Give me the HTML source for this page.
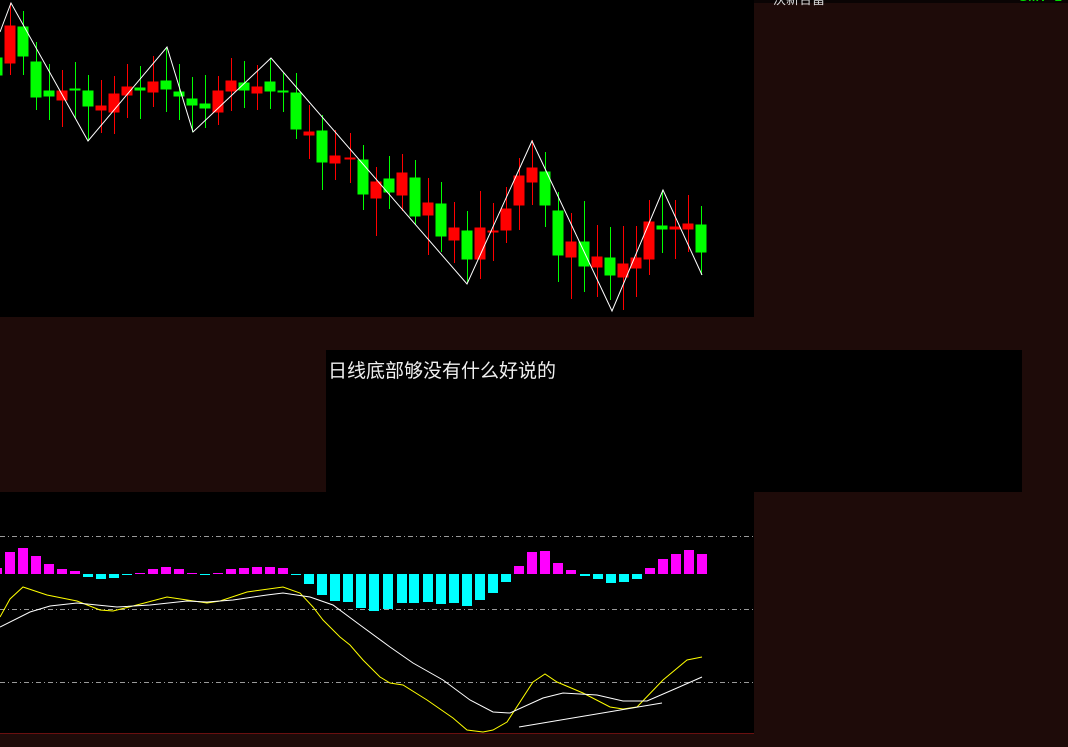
<!DOCTYPE html>
<html><head><meta charset="utf-8"><style>
html,body{margin:0;padding:0;width:1068px;height:747px;overflow:hidden;background:#1e0b09;}
.abs{position:absolute}
</style></head><body>
<div class="abs" style="left:0;top:0;width:754px;height:317px;background:#000"></div>
<div class="abs" style="left:754px;top:0;width:314px;height:3px;background:#0a0404"></div>
<div class="abs" style="left:773px;top:-11px;font:13px 'Liberation Sans','Noto Sans CJK SC',sans-serif;color:#ddd">沃新合富</div>
<div class="abs" style="left:1018px;top:-11px;font:bold 13px 'Liberation Sans',sans-serif;color:#00e000">GMT+1</div>
<div class="abs" style="left:326px;top:350px;width:696px;height:142px;background:#000"></div>
<div class="abs" style="left:328px;top:356px;font:19px 'Liberation Sans','Noto Sans CJK SC',sans-serif;color:#f0f0f0;white-space:nowrap">日线底部够没有什么好说的</div>
<div class="abs" style="left:0;top:492px;width:754px;height:241px;background:#000"></div>
<div class="abs" style="left:0;top:733px;width:754px;height:1px;background:#6a1010"></div>
<svg class="abs" style="left:0;top:0" width="754" height="317">
<g stroke-width="1">
<g stroke="#00ff00" fill="#00ff00">
<rect x="-4" y="58" width="6" height="17"/>
<line x1="23.5" y1="11" x2="23.5" y2="75"/><rect x="18" y="27" width="10" height="29"/>
<line x1="36.5" y1="42" x2="36.5" y2="110"/><rect x="31" y="62" width="10" height="35"/>
<line x1="49.5" y1="64" x2="49.5" y2="120"/><rect x="44" y="91" width="10" height="5"/>
<line x1="75.5" y1="62" x2="75.5" y2="118"/><rect x="70" y="89" width="10" height="1"/>
<line x1="88.5" y1="75" x2="88.5" y2="141"/><rect x="83" y="91" width="10" height="15"/>
<line x1="140.5" y1="66" x2="140.5" y2="119"/><rect x="135" y="88" width="10" height="2"/>
<line x1="166.5" y1="47" x2="166.5" y2="112"/><rect x="161" y="81" width="10" height="8"/>
<line x1="179.5" y1="64" x2="179.5" y2="120"/><rect x="174" y="92" width="10" height="4"/>
<line x1="192.5" y1="77" x2="192.5" y2="132"/><rect x="187" y="99" width="10" height="6"/>
<line x1="205.5" y1="75" x2="205.5" y2="128"/><rect x="200" y="104" width="10" height="4"/>
<line x1="244.5" y1="61" x2="244.5" y2="108"/><rect x="239" y="83" width="10" height="7"/>
<line x1="270.5" y1="58" x2="270.5" y2="109"/><rect x="265" y="82" width="10" height="9"/>
<line x1="283.5" y1="73" x2="283.5" y2="112"/><rect x="278" y="91" width="10" height="1"/>
<line x1="296.5" y1="73" x2="296.5" y2="139"/><rect x="291" y="93" width="10" height="36"/>
<line x1="322.5" y1="115" x2="322.5" y2="190"/><rect x="317" y="131" width="10" height="31"/>
<line x1="363.5" y1="145" x2="363.5" y2="210"/><rect x="358" y="160" width="10" height="34"/>
<line x1="389.5" y1="156" x2="389.5" y2="209"/><rect x="384" y="179" width="10" height="13"/>
<line x1="415.5" y1="160" x2="415.5" y2="225"/><rect x="410" y="178" width="10" height="38"/>
<line x1="441.5" y1="182" x2="441.5" y2="252"/><rect x="436" y="204" width="10" height="32"/>
<line x1="467.5" y1="211" x2="467.5" y2="283"/><rect x="462" y="231" width="10" height="28"/>
<line x1="545.5" y1="152" x2="545.5" y2="227"/><rect x="540" y="172" width="10" height="33"/>
<line x1="558.5" y1="192" x2="558.5" y2="282"/><rect x="553" y="211" width="10" height="44"/>
<line x1="584.5" y1="201" x2="584.5" y2="292"/><rect x="579" y="242" width="10" height="24"/>
<line x1="610.5" y1="227" x2="610.5" y2="300"/><rect x="605" y="258" width="10" height="17"/>
<line x1="662.5" y1="190" x2="662.5" y2="253"/><rect x="657" y="226" width="10" height="3"/>
<line x1="701.5" y1="206" x2="701.5" y2="275"/><rect x="696" y="225" width="10" height="27"/>
</g>
<g stroke="#ff0000" fill="#ff0000">
<line x1="10.5" y1="3" x2="10.5" y2="75"/><rect x="5" y="26" width="10" height="37"/>
<line x1="62.5" y1="70" x2="62.5" y2="127"/><rect x="57" y="91" width="10" height="9"/>
<line x1="101.5" y1="80" x2="101.5" y2="133"/><rect x="96" y="106" width="10" height="4"/>
<line x1="114.5" y1="76" x2="114.5" y2="134"/><rect x="109" y="94" width="10" height="18"/>
<line x1="127.5" y1="64" x2="127.5" y2="118"/><rect x="122" y="87" width="10" height="8"/>
<line x1="153.5" y1="56" x2="153.5" y2="107"/><rect x="148" y="82" width="10" height="10"/>
<line x1="218.5" y1="76" x2="218.5" y2="125"/><rect x="213" y="91" width="10" height="21"/>
<line x1="231.5" y1="58" x2="231.5" y2="111"/><rect x="226" y="81" width="10" height="10"/>
<line x1="257.5" y1="65" x2="257.5" y2="110"/><rect x="252" y="87" width="10" height="6"/>
<line x1="309.5" y1="105" x2="309.5" y2="159"/><rect x="304" y="132" width="10" height="3"/>
<line x1="335.5" y1="130" x2="335.5" y2="180"/><rect x="330" y="156" width="10" height="7"/>
<line x1="350.5" y1="133" x2="350.5" y2="183"/><rect x="345" y="158" width="10" height="1"/>
<line x1="376.5" y1="167" x2="376.5" y2="236"/><rect x="371" y="182" width="10" height="16"/>
<line x1="402.5" y1="154" x2="402.5" y2="211"/><rect x="397" y="173" width="10" height="22"/>
<line x1="428.5" y1="178" x2="428.5" y2="255"/><rect x="423" y="203" width="10" height="12"/>
<line x1="454.5" y1="202" x2="454.5" y2="263"/><rect x="449" y="228" width="10" height="12"/>
<line x1="480.5" y1="191" x2="480.5" y2="279"/><rect x="475" y="228" width="10" height="31"/>
<line x1="493.5" y1="203" x2="493.5" y2="261"/><rect x="488" y="231" width="10" height="1"/>
<line x1="506.5" y1="187" x2="506.5" y2="243"/><rect x="501" y="209" width="10" height="21"/>
<line x1="519.5" y1="158" x2="519.5" y2="230"/><rect x="514" y="176" width="10" height="29"/>
<line x1="532.5" y1="140" x2="532.5" y2="205"/><rect x="527" y="168" width="10" height="14"/>
<line x1="571.5" y1="213" x2="571.5" y2="299"/><rect x="566" y="242" width="10" height="15"/>
<line x1="597.5" y1="225" x2="597.5" y2="297"/><rect x="592" y="257" width="10" height="10"/>
<line x1="623.5" y1="226" x2="623.5" y2="310"/><rect x="618" y="264" width="10" height="13"/>
<line x1="636.5" y1="226" x2="636.5" y2="297"/><rect x="631" y="258" width="10" height="10"/>
<line x1="649.5" y1="200" x2="649.5" y2="275"/><rect x="644" y="222" width="10" height="37"/>
<line x1="675.5" y1="200" x2="675.5" y2="259"/><rect x="670" y="227" width="10" height="2"/>
<line x1="688.5" y1="195" x2="688.5" y2="252"/><rect x="683" y="224" width="10" height="5"/>
</g>
</g>
<polyline fill="none" stroke="#fff" stroke-width="1" points="0,32 11,3 88,141 167,47 193,132 271,58 467,284 532,141 612,311 663,190 702,275"/>
</svg>
<svg class="abs" style="left:0;top:492px" width="754" height="241">
<g stroke="#9a9a9a" stroke-dasharray="5,3,1,3" stroke-width="1">
<line x1="0" y1="44.5" x2="754" y2="44.5"/><line x1="0" y1="117.5" x2="754" y2="117.5"/><line x1="0" y1="190.5" x2="754" y2="190.5"/>
</g>
<g transform="translate(0,-492)">
<g fill="#ff00ff">
<rect x="-3" y="568" width="5" height="6"/><rect x="5" y="552" width="10" height="22"/><rect x="18" y="548" width="10" height="26"/><rect x="31" y="556" width="10" height="18"/><rect x="44" y="564" width="10" height="10"/><rect x="57" y="569" width="10" height="5"/><rect x="70" y="571" width="10" height="3"/>
<rect x="135" y="573" width="10" height="1"/><rect x="148" y="569" width="10" height="5"/><rect x="161" y="567" width="10" height="7"/><rect x="174" y="569" width="10" height="5"/><rect x="187" y="573" width="10" height="1"/><rect x="213" y="573" width="10" height="1"/><rect x="226" y="569" width="10" height="5"/><rect x="239" y="568" width="10" height="6"/><rect x="252" y="567" width="10" height="7"/><rect x="265" y="567" width="10" height="7"/><rect x="278" y="568" width="10" height="6"/>
<rect x="514" y="566" width="10" height="8"/><rect x="527" y="552" width="10" height="22"/><rect x="540" y="551" width="10" height="23"/><rect x="553" y="563" width="10" height="11"/><rect x="566" y="570" width="10" height="4"/>
<rect x="645" y="568" width="10" height="6"/><rect x="658" y="559" width="10" height="15"/><rect x="671" y="554" width="10" height="20"/><rect x="684" y="550" width="10" height="24"/><rect x="697" y="554" width="10" height="20"/>
</g>
<g fill="#00ffff">
<rect x="83" y="574" width="10" height="3"/><rect x="96" y="574" width="10" height="5"/><rect x="109" y="574" width="10" height="4"/><rect x="122" y="574" width="10" height="1"/><rect x="200" y="574" width="10" height="1"/><rect x="291" y="574" width="10" height="1"/>
<rect x="304" y="574" width="10" height="10"/><rect x="317" y="574" width="10" height="21"/><rect x="330" y="574" width="10" height="27"/><rect x="343" y="574" width="10" height="28"/><rect x="356" y="574" width="10" height="34"/><rect x="369" y="574" width="10" height="37"/><rect x="383" y="574" width="10" height="35"/><rect x="397" y="574" width="10" height="29"/><rect x="409" y="574" width="10" height="29"/><rect x="423" y="574" width="10" height="28"/><rect x="436" y="574" width="10" height="30"/><rect x="449" y="574" width="10" height="29"/><rect x="462" y="574" width="10" height="32"/><rect x="475" y="574" width="10" height="26"/><rect x="488" y="574" width="10" height="19"/><rect x="501" y="574" width="10" height="8"/>
<rect x="580" y="574" width="10" height="2"/><rect x="593" y="574" width="10" height="5"/><rect x="606" y="574" width="10" height="9"/><rect x="619" y="574" width="10" height="8"/><rect x="632" y="574" width="10" height="5"/>
</g>
<polyline fill="none" stroke="#ffff00" stroke-width="1" points="0,617 10,599 23,587 47,595 77,601 100,610 113,611 133,606 167,597 187,600 207,603 220,601 247,592 283,587 300,593 313,607 323,620 340,637 350,645 363,660 380,677 390,683 403,685 427,700 453,718 467,730 483,732 493,730 507,722 533,682 545,674 557,682 583,693 610,707 623,709 637,707 663,680 687,660 702,657"/>
<polyline fill="none" stroke="#ffffff" stroke-width="1" points="0,627 30,612 50,606 77,603 117,607 150,605 187,601 207,602 233,600 267,595 283,593 310,597 333,605 360,625 390,647 413,663 443,680 470,700 493,712 510,713 543,698 563,693 597,695 623,701 647,701 677,688 702,677"/>
<line x1="519" y1="727" x2="662" y2="703" stroke="#fff" stroke-width="1"/>
</g>
</svg>
</body></html>
